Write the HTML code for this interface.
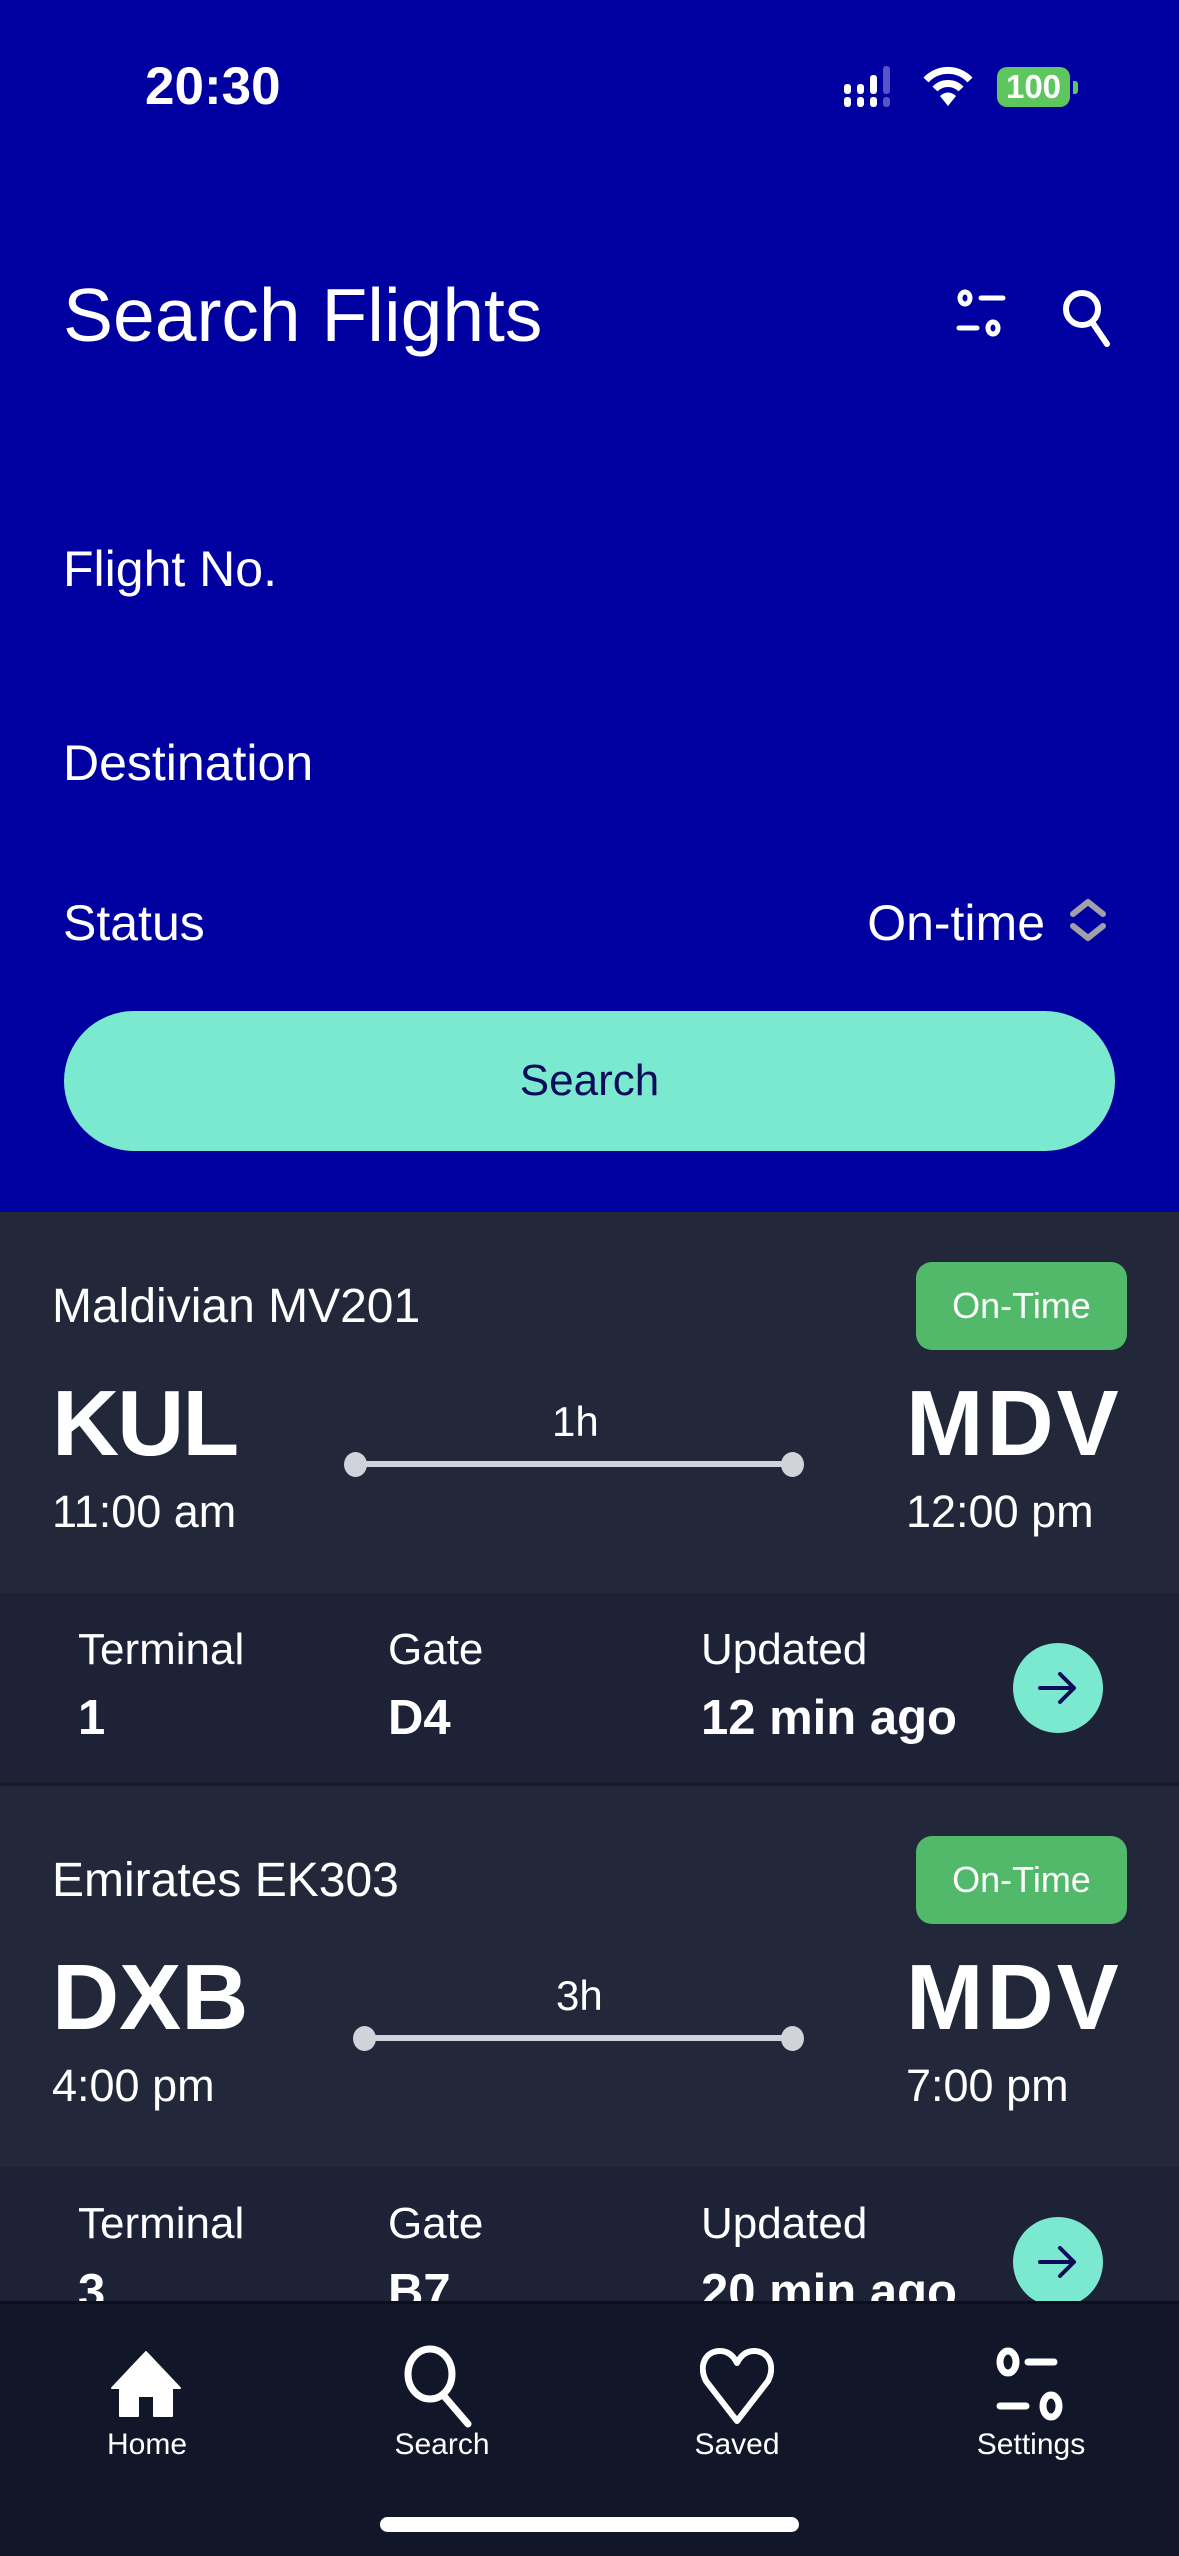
<!DOCTYPE html>
<html><head><meta charset="utf-8"><style>
*{margin:0;padding:0;box-sizing:border-box}
body{width:1179px;height:2556px;position:relative;overflow:hidden;background:#1d2236;font-family:"Liberation Sans",sans-serif;color:#fff}
.a{position:absolute;white-space:nowrap}
.t{line-height:1}
</style></head><body>
<div class="a" style="left:0;top:0;width:1179px;height:1212px;background:#0000a0"></div>
<div class="a t" style="left:145px;top:60px;font-size:53px;font-weight:bold">20:30</div>
<svg class="a" style="left:843px;top:66px" width="60" height="44"><g fill="#fff"><rect x="1" y="18" width="7" height="10" rx="3"/><rect x="1" y="31" width="7" height="10" rx="3"/><rect x="14" y="18" width="7" height="10" rx="3"/><rect x="14" y="31" width="7" height="10" rx="3"/><rect x="27" y="9" width="7" height="19" rx="3"/><rect x="27" y="31" width="7" height="10" rx="3"/></g><g fill="#5555c8"><rect x="40" y="0" width="7" height="28" rx="3"/><rect x="40" y="31" width="7" height="10" rx="3"/></g></svg>
<svg class="a" style="left:922px;top:64px" width="52" height="44" viewBox="0 0 52 44"><path d="M4 16 A30 30 0 0 1 48 16" stroke="#fff" stroke-width="7" fill="none"/><path d="M13 25 A18 18 0 0 1 39 25" stroke="#fff" stroke-width="7" fill="none"/><path d="M18 32 L26 42 L34 32 A11 11 0 0 0 18 32Z" fill="#fff"/></svg>
<div class="a" style="left:997px;top:67px;width:73px;height:40px;background:#5ec65e;border-radius:10px;font-size:33px;font-weight:bold;text-align:center;line-height:40px">100</div>
<div class="a" style="left:1073px;top:81px;width:5px;height:13px;background:#5ec65e;border-radius:0 3px 3px 0"></div>
<div class="a t" style="left:63px;top:278px;font-size:75px">Search Flights</div>
<svg class="a" style="left:955px;top:288px" width="60" height="50" viewBox="0 0 60 50" fill="none" stroke="#fff" stroke-width="5"><ellipse cx="10" cy="10" rx="5" ry="6"/><line x1="26" y1="10" x2="48" y2="10" stroke-linecap="round"/><line x1="4" y1="40" x2="22" y2="40" stroke-linecap="round"/><ellipse cx="38" cy="40" rx="5" ry="6"/></svg>
<svg class="a" style="left:1062px;top:288px" width="60" height="60" viewBox="0 0 60 60" fill="none" stroke="#fff" stroke-width="6"><circle cx="20" cy="21" r="16"/><line x1="30" y1="34" x2="45" y2="56" stroke-linecap="round"/></svg>
<div class="a t" style="left:63px;top:544px;font-size:50px">Flight No.</div>
<div class="a t" style="left:63px;top:738px;font-size:50px">Destination</div>
<div class="a t" style="left:63px;top:898px;font-size:50px">Status</div>
<div class="a t" style="right:134px;top:898px;font-size:50px">On-time</div>
<svg class="a" style="left:1069px;top:898px" width="38" height="44" viewBox="0 0 38 44" fill="none" stroke="#a0a0a8" stroke-width="6" stroke-linecap="round" stroke-linejoin="round"><path d="M4 16 L19 4 L34 16"/><path d="M4 28 L19 40 L34 28"/></svg>
<div class="a" style="left:64px;top:1011px;width:1051px;height:140px;border-radius:70px;background:#7be9cf;color:#0c0c5a;font-size:44px;text-align:center;line-height:140px">Search</div>

<!-- card 1 -->
<div class="a" style="left:0;top:1212px;width:1179px;height:381px;background:#222839"></div>
<div class="a" style="left:0;top:1593px;width:1179px;height:189px;background:#1d2236"></div>
<div class="a" style="left:0;top:1782px;width:1179px;height:4px;background:#161a2a"></div>
<div class="a t" style="left:52px;top:1283px;font-size:48px">Maldivian MV201</div>
<div class="a" style="left:916px;top:1262px;width:211px;height:88px;background:#52b86a;border-radius:16px;font-size:36px;text-align:center;line-height:88px">On-Time</div>
<div class="a t" style="left:52px;top:1377px;font-size:93px;font-weight:bold;letter-spacing:-2px">KUL</div>
<div class="a t" style="left:906px;top:1377px;font-size:93px;font-weight:bold;letter-spacing:3px">MDV</div>
<div class="a t" style="left:52px;top:1489px;font-size:45px">11:00 am</div>
<div class="a t" style="left:906px;top:1489px;font-size:45px">12:00 pm</div>
<div class="a t" style="left:552px;top:1401px;font-size:42px">1h</div>
<div class="a" style="left:355px;top:1461px;width:438px;height:6px;background:#d0d3d9"></div>
<div class="a" style="left:344px;top:1452px;width:23px;height:25px;border-radius:50%;background:#d0d3d9"></div>
<div class="a" style="left:781px;top:1452px;width:23px;height:25px;border-radius:50%;background:#d0d3d9"></div>
<div class="a t" style="left:78px;top:1628px;font-size:44px">Terminal</div>
<div class="a t" style="left:388px;top:1628px;font-size:44px">Gate</div>
<div class="a t" style="left:701px;top:1628px;font-size:44px">Updated</div>
<div class="a t" style="left:78px;top:1694px;font-size:49px;font-weight:bold">1</div>
<div class="a t" style="left:388px;top:1694px;font-size:49px;font-weight:bold">D4</div>
<div class="a t" style="left:701px;top:1694px;font-size:49px;font-weight:bold">12 min ago</div>
<svg class="a" style="left:1012px;top:1642px" width="92" height="92" viewBox="0 0 92 92"><circle cx="46" cy="46" r="45" fill="#7be9cf"/><path d="M28 46 H62 M48 32 L62 46 L48 60" stroke="#0c0c5a" stroke-width="4" fill="none" stroke-linecap="round" stroke-linejoin="round"/></svg>

<!-- card 2 -->
<div class="a" style="left:0;top:1786px;width:1179px;height:381px;background:#222839"></div>
<div class="a" style="left:0;top:2167px;width:1179px;height:189px;background:#1d2236"></div>
<div class="a t" style="left:52px;top:1857px;font-size:48px">Emirates EK303</div>
<div class="a" style="left:916px;top:1836px;width:211px;height:88px;background:#52b86a;border-radius:16px;font-size:36px;text-align:center;line-height:88px">On-Time</div>
<div class="a t" style="left:52px;top:1951px;font-size:93px;font-weight:bold;letter-spacing:0px">DXB</div>
<div class="a t" style="left:906px;top:1951px;font-size:93px;font-weight:bold;letter-spacing:3px">MDV</div>
<div class="a t" style="left:52px;top:2063px;font-size:45px">4:00 pm</div>
<div class="a t" style="left:906px;top:2063px;font-size:45px">7:00 pm</div>
<div class="a t" style="left:556px;top:1975px;font-size:42px">3h</div>
<div class="a" style="left:364px;top:2035px;width:429px;height:6px;background:#d0d3d9"></div>
<div class="a" style="left:353px;top:2026px;width:23px;height:25px;border-radius:50%;background:#d0d3d9"></div>
<div class="a" style="left:781px;top:2026px;width:23px;height:25px;border-radius:50%;background:#d0d3d9"></div>
<div class="a t" style="left:78px;top:2202px;font-size:44px">Terminal</div>
<div class="a t" style="left:388px;top:2202px;font-size:44px">Gate</div>
<div class="a t" style="left:701px;top:2202px;font-size:44px">Updated</div>
<div class="a t" style="left:78px;top:2268px;font-size:49px;font-weight:bold">3</div>
<div class="a t" style="left:388px;top:2268px;font-size:49px;font-weight:bold">B7</div>
<div class="a t" style="left:701px;top:2268px;font-size:49px;font-weight:bold">20 min ago</div>
<svg class="a" style="left:1012px;top:2216px" width="92" height="92" viewBox="0 0 92 92"><circle cx="46" cy="46" r="45" fill="#7be9cf"/><path d="M28 46 H62 M48 32 L62 46 L48 60" stroke="#0c0c5a" stroke-width="4" fill="none" stroke-linecap="round" stroke-linejoin="round"/></svg>

<!-- tab bar -->
<div class="a" style="left:0;top:2301px;width:1179px;height:255px;background:#111628;border-top:3px solid #0b0e1c"></div>
<svg class="a" style="left:110px;top:2350px" width="72" height="68" viewBox="0 0 72 68"><path d="M36 2 L70 38 L62 38 L62 66 L44 66 L44 46 L28 46 L28 66 L10 66 L10 38 L2 38 Z" fill="#fff" stroke="#fff" stroke-width="2" stroke-linejoin="round"/></svg>
<svg class="a" style="left:402px;top:2344px" width="80" height="84" viewBox="0 0 80 84" fill="none" stroke="#fff" stroke-width="7"><ellipse cx="28" cy="30" rx="22" ry="25"/><line x1="42" y1="52" x2="66" y2="80" stroke-linecap="round"/></svg>
<svg class="a" style="left:700px;top:2347px" width="74" height="78" viewBox="0 0 74 78"><path d="M37 74 L6 34 C-2 18 6 4 20 4 C29 4 34 10 37 16 C40 10 45 4 54 4 C68 4 76 18 68 34 Z" fill="none" stroke="#fff" stroke-width="6" stroke-linejoin="round"/></svg>
<svg class="a" style="left:990px;top:2342px" width="84" height="84" viewBox="0 0 84 84" fill="none" stroke="#fff" stroke-width="7" stroke-linecap="round"><ellipse cx="18" cy="20" rx="8" ry="11"/><line x1="38" y1="20" x2="64" y2="20"/><line x1="10" y1="64" x2="36" y2="64"/><ellipse cx="61" cy="64" rx="8" ry="11"/></svg>
<div class="a t" style="left:87px;top:2430px;width:120px;text-align:center;font-size:30px">Home</div>
<div class="a t" style="left:382px;top:2430px;width:120px;text-align:center;font-size:30px">Search</div>
<div class="a t" style="left:677px;top:2430px;width:120px;text-align:center;font-size:30px">Saved</div>
<div class="a t" style="left:961px;top:2430px;width:140px;text-align:center;font-size:30px">Settings</div>
<div class="a" style="left:380px;top:2517px;width:419px;height:15px;border-radius:8px;background:#fff"></div>
</body></html>
